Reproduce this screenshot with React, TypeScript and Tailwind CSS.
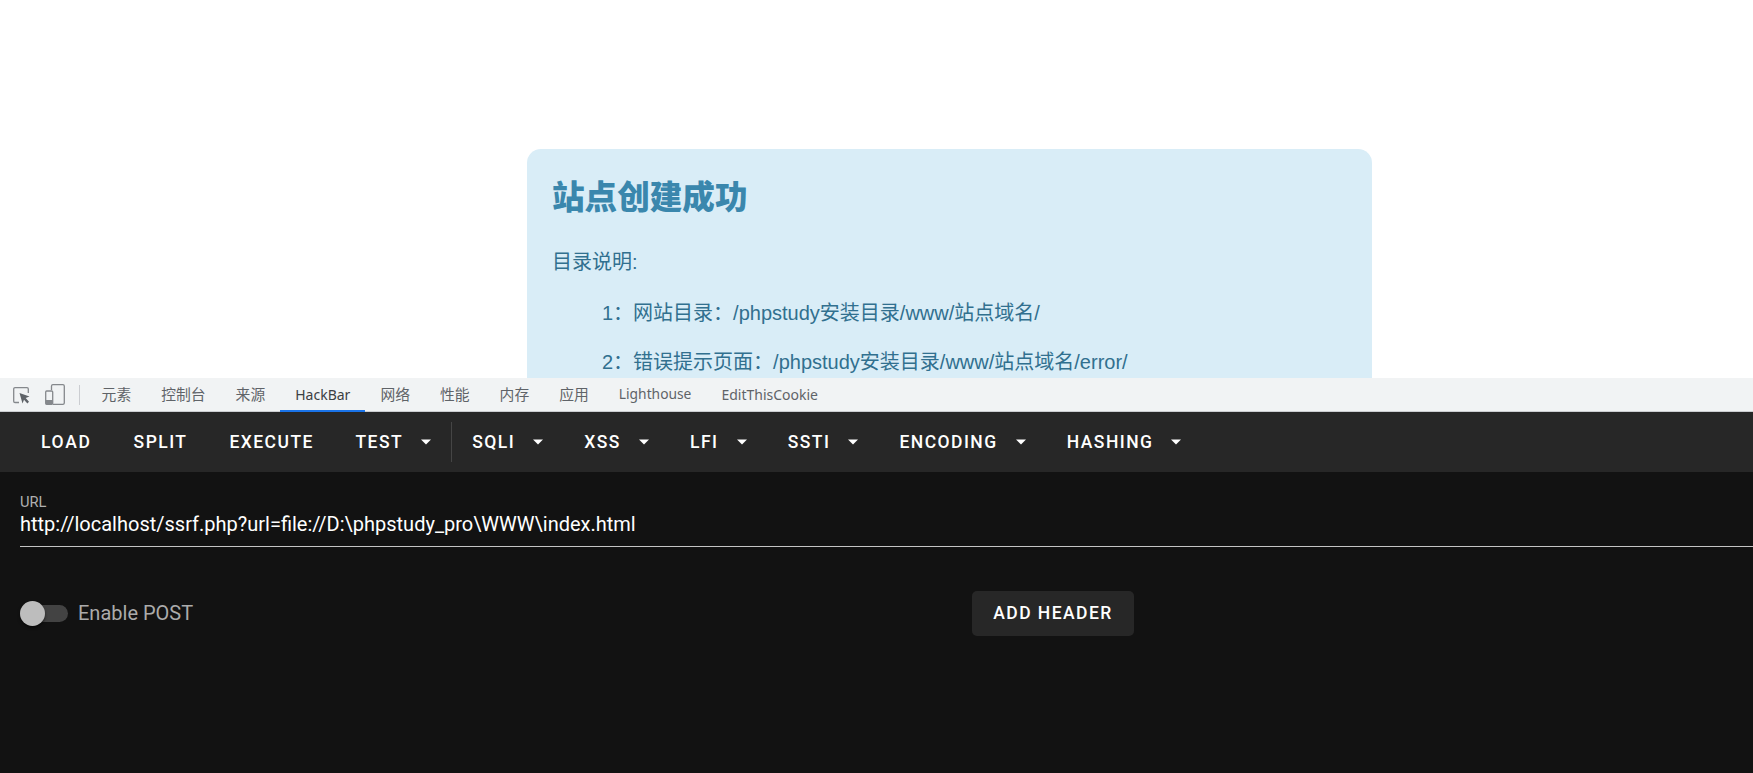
const roboto = "font-['Roboto',sans-serif]";

function Caret() {
  return (
    <svg width="10" height="6" viewBox="0 0 10 6" className="ml-[18px] mb-[2px]" fill="#ffffff">
      <path d="M0 0.5h10L5 5.6z" />
    </svg>
  );
}

function ToolButton({ label, menu, wide }: { label: string; menu?: boolean; wide?: boolean }) {
  return (
    <div
      className={`flex items-center h-[40px] text-[17.5px] leading-none font-medium text-white whitespace-nowrap ${
        menu ? "px-[20.6px]" : "px-[21px]"
      } ${wide ? "tracking-[1.7px]" : "tracking-[1.45px]"}`}
    >
      <span>{label}</span>
      {menu && <Caret />}
    </div>
  );
}

const tabs = [
  { t: "元素", c: "text-[14.8px]" },
  { t: "控制台", c: "text-[14.8px]" },
  { t: "来源", c: "text-[14.8px]" },
  { t: "HackBar", c: "text-[14px]" },
  { t: "网络", c: "text-[14.8px]" },
  { t: "性能", c: "text-[14.8px]" },
  { t: "内存", c: "text-[14.8px]" },
  { t: "应用", c: "text-[14.8px]" },
  { t: "Lighthouse", c: "text-[13.8px]" },
  { t: "EditThisCookie", c: "text-[14px]" },
];

export default function App() {
  return (
    <div className="w-[1753px] h-[773px] overflow-hidden flex flex-col bg-white">
      {/* Page */}
      <div className="h-[378px] shrink-0 overflow-hidden pt-[149px] pl-[527px] font-['Liberation_Sans','Noto_Sans_CJK_SC',sans-serif]">
        <div className="w-[845px] h-[300px] rounded-[14px] bg-[#d9edf7] pl-[25px] pt-[27px]">
          <h1 className="text-[32.6px] leading-[44px] font-black text-[#3a87ad]">站点创建成功</h1>
          <p className="mt-[28px] text-[20px] leading-[28px] text-[#31708f]">目录说明:</p>
          <p className="mt-[22.5px] pl-[50px] text-[20px] leading-[28px] text-[#31708f]">1：网站目录：/phpstudy安装目录/www/站点域名/</p>
          <p className="mt-[21px] pl-[50px] text-[20px] leading-[28px] text-[#31708f]">2：错误提示页面：/phpstudy安装目录/www/站点域名/error/</p>
        </div>
      </div>

      {/* DevTools tab strip */}
      <div className="h-[34px] shrink-0 flex items-stretch bg-[#f1f3f4] border-b border-[#cbcdd1] pl-[13px]">
        <div className="flex items-center">
          <svg width="17" height="17" viewBox="0 0 17 17" fill="none" className="mt-[1px]">
            <path d="M6 15.5H2A1.3 1.3 0 0 1 .7 14.2V2A1.3 1.3 0 0 1 2 .7h12A1.3 1.3 0 0 1 15.3 2v4" stroke="#85888c" strokeWidth="1.3" />
            <path d="M6.5 6l10 3.6-3.8 1.5 3.3 3.6-1.6 1.7-3.4-3.6-1.5 3.8z" fill="#5f6368" />
          </svg>
          <svg width="20" height="21" viewBox="0 0 20 21" fill="none" className="ml-[15px]">
            <path d="M6.5 6V2A1.4 1.4 0 0 1 7.9.7h10A1.4 1.4 0 0 1 19.3 2v17a1.4 1.4 0 0 1-1.4 1.3H8" stroke="#85888c" strokeWidth="1.3" />
            <rect x=".7" y="7" width="7" height="13.3" rx="1" stroke="#85888c" strokeWidth="1.3" />
            <rect x=".7" y="16" width="7" height="4.3" fill="#85888c" />
          </svg>
        </div>
        <div className="w-px h-[20px] self-center bg-[#cbcdd1] ml-[14px] mr-[6.6px]" />
        <div className="flex items-stretch font-['Noto_Sans','Noto_Sans_CJK_SC',sans-serif] text-[#5f6368]">
          {tabs.map(({ t, c }) => (
            <div
              key={t}
              className={
                t === "HackBar"
                  ? `px-[15px] flex items-center border-b-2 border-[#1a73e8] text-[#3c4043] mb-[-1px] ${c}`
                  : `px-[15px] flex items-center ${c}`
              }
            >
              {t}
            </div>
          ))}
        </div>
      </div>

      {/* HackBar */}
      <div className={`flex-1 flex flex-col bg-[#121212] ${roboto}`}>
        <div className="h-[60px] shrink-0 flex items-center bg-[#272727] pl-[20px] pt-[2px]">
          <ToolButton label="LOAD" wide />
          <ToolButton label="SPLIT" />
          <ToolButton label="EXECUTE" />
          <ToolButton label="TEST" menu />
          <div className="w-px h-[40px] mb-[2px] -ml-[1px] bg-[#454545]" />
          <ToolButton label="SQLI" menu />
          <ToolButton label="XSS" menu />
          <ToolButton label="LFI" menu />
          <ToolButton label="SSTI" menu />
          <ToolButton label="ENCODING" menu />
          <ToolButton label="HASHING" menu />
        </div>

        <div className="pl-[20px] pt-[22px]">
          <div className="text-[14.7px] leading-[16px] text-[#b0b0b0]">URL</div>
          <div className="mt-[2px] h-[35px] border-b border-[#c4c4c4] text-[20px] leading-[24px] text-white">
            {"http://localhost/ssrf.php?url=file://D:\\phpstudy_pro\\WWW\\index.html"}
          </div>
        </div>

        <div className="relative mt-[43px] h-[46px] pl-[20px] flex items-center">
          <div className="relative w-[48px] h-[17px] rounded-full bg-[#434343]">
            <div className="absolute left-0 top-[-4px] w-[25px] h-[25px] rounded-full bg-[#bdbdbd] shadow-[0_2px_3px_rgba(0,0,0,0.5)]" />
          </div>
          <span className="ml-[10px] w-[114px] whitespace-nowrap text-[20px] text-[#ababab]">Enable POST</span>
          <div className="ml-[780px] w-[162px] h-[45px] rounded-[5px] bg-[#272727] flex items-center justify-center text-[17.5px] font-medium tracking-[1.45px] text-white">
            ADD HEADER
          </div>
        </div>
      </div>
    </div>
  );
}
